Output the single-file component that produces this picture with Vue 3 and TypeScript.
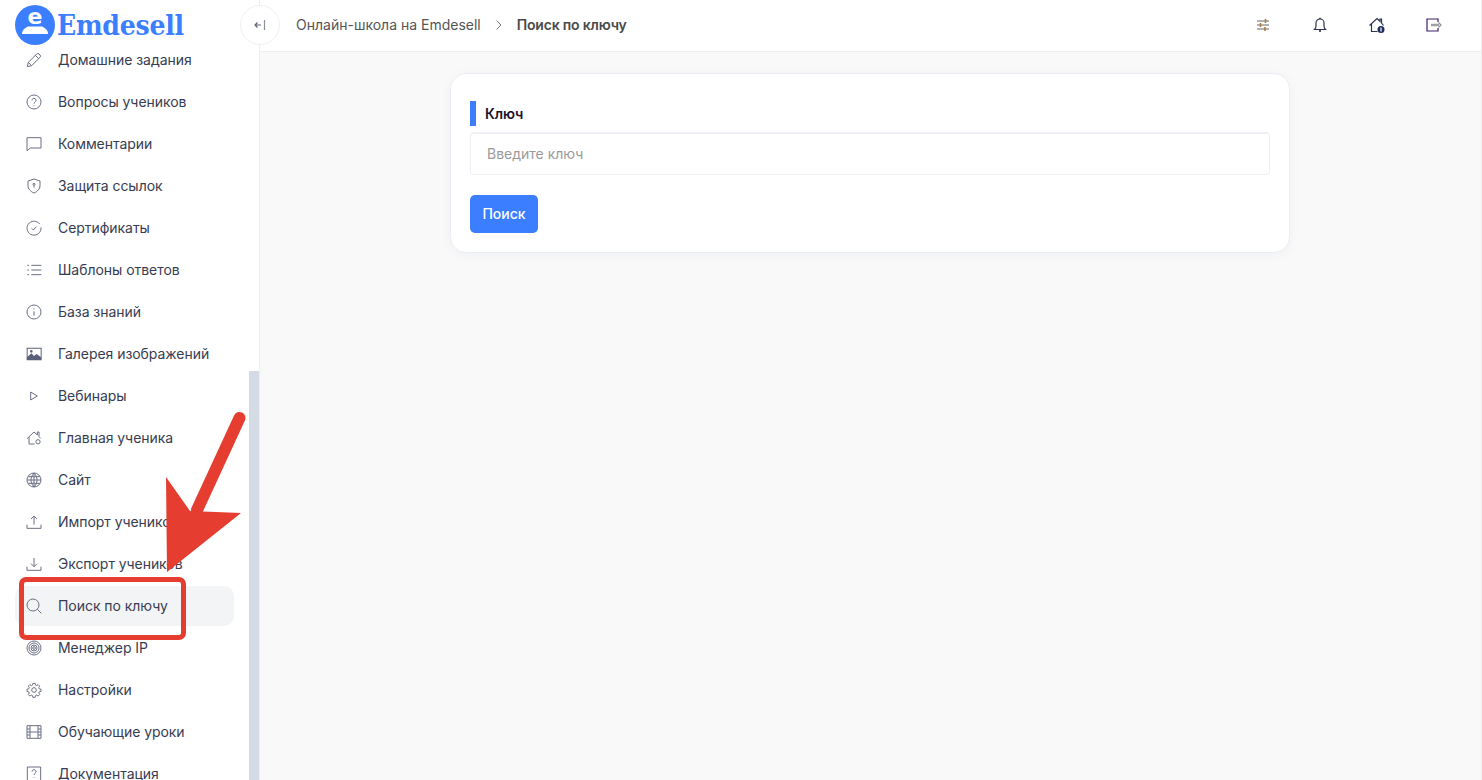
<script setup lang="ts">
interface NavItem {
  label: string
  paths: string[]
  filled?: boolean
  active?: boolean
}

const gear =
  'M10.3 2h3.4l.5 2.600 1.800.8 2.200-1.500 2.400 2.400-1.500 2.200.8 1.800 2.600.5v3.400l-2.600.5-.8 1.800 1.500 2.200-2.400 2.400-2.200-1.500-1.800.8-.5 2.600h-3.400l-.5-2.600-1.800-.8-2.200 1.500-2.400-2.400 1.500-2.200-.8-1.800-2.600-.5v-3.400l2.600-.5.8-1.800-1.500-2.200 2.400-2.400 2.200 1.500 1.800-.8z'

const circle = 'M12 1.500a10.500 10.500 0 1 0 0 21 10.500 10.500 0 0 0 0-21z'

const items: NavItem[] = [
  { label: 'Домашние задания', paths: ['M2 22l1.500-6.500L16 3a2.500 2.500 0 0 1 3.500 0l1.500 1.500a2.500 2.500 0 0 1 0 3.500L8.500 20.500z', 'M14 5l5 5', 'M3.500 15.500l5 5'] },
  { label: 'Вопросы учеников', paths: [circle, 'M9 9.500a3 3 0 1 1 4.500 2.600c-1 .6-1.500 1.200-1.500 2.400', 'M12 17v1'] },
  { label: 'Комментарии', paths: ['M1.500 2.500h21v15.500H6.500l-5 4z'] },
  { label: 'Защита ссылок', paths: ['M12 1.500l9 3v7c0 5-3.800 8.800-9 11-5.200-2.200-9-6-9-11v-7z', 'M12 8a1.500 1.500 0 1 0 0 3 1.500 1.500 0 0 0 0-3z', 'M12 11v3.500'] },
  { label: 'Сертификаты', paths: ['M20.500 6A10.500 10.500 0 1 0 22.500 11', 'M8.500 12.500l2.500 2.500 4.500-5'] },
  { label: 'Шаблоны ответов', paths: ['M8 5h15', 'M8 12h15', 'M8 19h15', 'M2 5h2.500', 'M2 12h2.500', 'M2 19h2.500'] },
  { label: 'База знаний', paths: [circle, 'M12 11v6.500', 'M12 6.500v1.500'] },
  { label: 'Галерея изображений', filled: true, paths: ['M1 2.500h22.500v19H1z M2.500 4v12l5.500-5 4 4 4-3 6 4.500V4z M8 6a2 2 0 1 0 0 4 2 2 0 0 0 0-4z'] },
  { label: 'Вебинары', paths: ['M7 6l10 6-10 6z'] },
  { label: 'Главная ученика', paths: ['M1.500 13L12 3l5 4.500V3h2.500v7l2.500 2.500', 'M4.500 10.500V21h8.500', 'M18 14.500a3.200 3.200 0 1 0 0 6.400 3.200 3.200 0 0 0 0-6.400z'] },
  { label: 'Сайт', paths: [circle, 'M12 1.500c-6 6-6 15 0 21c6-6 6-15 0-21z', 'M1.500 12h21', 'M3 7h18', 'M3 17h18', 'M12 1.500v21'] },
  { label: 'Импорт учеников', paths: ['M12 16V3', 'M7.500 7.500L12 3l4.500 4.500', 'M1.500 16v5.500h21V16'] },
  { label: 'Экспорт учеников', paths: ['M12 3v13', 'M7.500 11.500L12 16l4.500-4.500', 'M1.500 16v5.500h21V16'] },
  { label: 'Поиск по ключу', active: true, paths: ['M10.500 1.500a9 9 0 1 0 0 18 9 9 0 0 0 0-18z', 'M17 17l6 6'] },
  { label: 'Менеджер IP', paths: [circle, 'M12 4.500a7.500 7.500 0 1 0 0 15 7.500 7.500 0 0 0 0-15z', 'M12 7.500a4.500 4.500 0 1 0 0 9 4.500 4.500 0 0 0 0-9z', 'M12 10a2 2 0 1 0 0 4 2 2 0 0 0 0-4z'] },
  { label: 'Настройки', paths: [gear, 'M12 8.500a3.500 3.500 0 1 0 0 7 3.500 3.500 0 0 0 0-7z'] },
  { label: 'Обучающие уроки', paths: ['M1.500 2.500h21v19h-21z', 'M6 2.500v19', 'M18 2.500v19', 'M6 12h12', 'M1.500 7.500H6', 'M1.500 12H6', 'M1.500 16.500H6', 'M18 7.500h4.500', 'M18 12h4.500', 'M18 16.500h4.500'] },
  { label: 'Документация', paths: ['M2 1.500h20v21H2z', 'M9 8.500a3 3 0 1 1 4.500 2.600c-1 .6-1.500 1.200-1.500 2.400', 'M12 17v1'] }
]
</script>

<template>
  <div class="app">
    <aside class="sidebar">
      <div class="logo">
        <svg class="logo-mark" width="40" height="40" viewBox="0 0 40 40" aria-hidden="true">
          <circle cx="20" cy="20" r="20" fill="#3b7eff" />
          <path d="M7 29c0-4 3-6 6-7.500h14c3 1.500 6 3.500 6 7.500z" fill="#fff" />
          <text class="logo-e" x="20" y="19" text-anchor="middle">e</text>
        </svg>
        <span class="logo-text">Emdesell</span>
      </div>
      <nav class="nav">
        <a v-for="item in items" :key="item.label" class="nav-item" :class="{ active: item.active }">
          <svg class="nav-icon" :class="{ filled: item.filled }" viewBox="0 0 24 24" aria-hidden="true">
            <path v-for="d in item.paths" :key="d" :d="d" />
          </svg>
          <span class="nav-label">{{ item.label }}</span>
        </a>
      </nav>
      <div class="scroll-thumb"></div>
    </aside>

    <div class="content">
      <header class="topbar">
        <button class="collapse" type="button" aria-label="Свернуть">
          <svg width="12" height="12" viewBox="0 0 12 12" aria-hidden="true">
            <path d="M7 6H1M3.500 3.500L1 6l2.500 2.500" fill="none" stroke="#5f6470" stroke-width="1.200" />
            <path d="M10.500 1v10" fill="none" stroke="#8a8f9a" stroke-width="1.200" />
          </svg>
        </button>
        <div class="crumbs">
          <span class="crumb">Онлайн-школа на Emdesell</span>
          <svg class="crumb-sep" width="8" height="12" viewBox="0 0 8 12" aria-hidden="true">
            <path d="M1.500 1.500L6 6l-4.500 4.500" fill="none" stroke="#777" stroke-width="1" />
          </svg>
          <span class="crumb current">Поиск по ключу</span>
        </div>
        <div class="tools">
          <svg class="tool" viewBox="0 0 16 16" aria-hidden="true">
            <path d="M2 4h12M2 8h12M2 12h12" stroke="#9a9a9a" stroke-width="1.400" />
            <path d="M10.500 2v4M5.500 6v4M10 10v4" stroke="#a8793a" stroke-width="1.500" />
          </svg>
          <svg class="tool" viewBox="0 0 16 16" aria-hidden="true">
            <path d="M2.500 12.500c1-1 1.500-2 1.500-3.500V6a4 4 0 0 1 8 0v3c0 1.500.5 2.500 1.500 3.500z" stroke="#2c3350" stroke-width="1.200" />
            <path d="M8 .8v1.200M7 14h2" stroke="#1c2030" stroke-width="1.500" />
          </svg>
          <svg class="tool" viewBox="0 0 16 16" aria-hidden="true">
            <path d="M.5 8.500L8 1.500l3 2.800V2h1.500v4l2 2.500M2.500 7v7.500h6" stroke="#2c3350" stroke-width="1.200" />
            <circle cx="12" cy="12.500" r="3.500" fill="#1f2c5c" stroke="none" />
            <path d="M12 10.500v4" stroke="#fff" stroke-width="1.200" />
          </svg>
          <svg class="tool" viewBox="0 0 16 16" aria-hidden="true">
            <path d="M12 5V2H1v12h11v-3" stroke="#3b1f6e" stroke-width="1.200" />
            <path d="M5 8h8" stroke="#a0a0a6" stroke-width="2.500" />
            <path d="M12.500 5.500L15 8l-2.500 2.500" stroke="#8e8e94" stroke-width="1.200" />
          </svg>
        </div>
      </header>

      <main class="main">
        <section class="card">
          <label class="field-label" for="key">Ключ</label>
          <input id="key" class="field" type="text" placeholder="Введите ключ" />
          <button class="search" type="button">Поиск</button>
        </section>
      </main>
    </div>

    <div class="callout"></div>
    <svg class="arrow" width="1482" height="780" viewBox="0 0 1482 780" aria-hidden="true">
      <path d="M239.500 418L197 510" fill="none" stroke="#e53d30" stroke-width="12" stroke-linecap="round" />
      <path d="M166 477L190 511L241 513L167 572z" fill="#e53d30" />
    </svg>
  </div>
</template>

<style scoped>
.app {
  position: relative;
  display: flex;
  height: 780px;
  overflow: hidden;
  font-family: Inter, "Noto Sans", sans-serif;
  font-size: 14px;
  background: #f9f9fa;
}

.sidebar {
  position: relative;
  flex: 0 0 260px;
  box-sizing: border-box;
  height: 780px;
  padding: 5px 0 0 15px;
  overflow: hidden;
  background: #fff;
  border-right: 1px solid #eeeeee;
}

.logo {
  position: relative;
  z-index: 1;
  display: flex;
  align-items: flex-start;
  gap: 2px;
  height: 35px;
}

.logo-mark {
  flex: none;
  overflow: visible;
}

.logo-e {
  font-family: "DejaVu Sans", sans-serif;
  font-size: 22px;
  font-weight: 700;
  fill: #fff;
}

.logo-text {
  font-family: "DejaVu Serif Condensed", "DejaVu Serif", serif;
  font-size: 28px;
  font-stretch: condensed;
  font-weight: 700;
  line-height: 41px;
  letter-spacing: -0.25px;
  color: #3b7eff;
}

.nav {
  display: flex;
  flex-direction: column;
  gap: 2px;
  width: 219px;
}

.nav-item {
  display: flex;
  flex: none;
  align-items: center;
  gap: 16px;
  height: 40px;
  padding-left: 11px;
  border-radius: 10px;
  color: #373c52;
  letter-spacing: -0.05px;
  white-space: nowrap;
}

.nav-item.active {
  background: #f3f4f6;
}

.nav-label {
  margin-bottom: 2px;
}

.nav-icon {
  flex: none;
  width: 16px;
  height: 16px;
  fill: none;
  stroke: #6b7085;
  stroke-width: 1.500;
}

.nav-icon.filled {
  fill: #5a607a;
  fill-rule: evenodd;
  stroke: none;
}

.scroll-thumb {
  position: absolute;
  top: 371px;
  right: -1px;
  bottom: 0;
  width: 11px;
  background: #d5dbe5;
}

.content {
  display: flex;
  flex: 1;
  flex-direction: column;
  min-width: 0;
  border-right: 1px solid #efefef;
}

.topbar {
  display: flex;
  flex: none;
  align-items: center;
  box-sizing: border-box;
  height: 52px;
  background: #fff;
  border-bottom: 1px solid #eeeeee;
}

.collapse {
  position: relative;
  z-index: 2;
  display: flex;
  flex: none;
  align-items: center;
  justify-content: center;
  box-sizing: border-box;
  width: 40px;
  height: 40px;
  margin: -2px 0 0 -20px;
  padding: 0;
  background: #fff;
  border: 1px solid #eef0f6;
  border-radius: 50%;
}

.crumbs {
  display: flex;
  align-items: center;
  margin-left: 16px;
  margin-top: -2px;
  color: #555;
  font-size: 14px;
}

.crumb-sep {
  margin: 0 14px;
}

.current {
  font-weight: 600;
  letter-spacing: -0.19px;
  color: #4a4a4a;
}

.tools {
  display: flex;
  gap: 41px;
  margin-left: auto;
  margin-right: 39px;
  margin-top: -2px;
}

.tool {
  width: 16px;
  height: 16px;
  fill: none;
  stroke-width: 1.100;
}

.main {
  flex: 1;
  padding-top: 21px;
}

.card {
  display: flex;
  flex-direction: column;
  align-items: flex-start;
  box-sizing: border-box;
  width: 840px;
  height: 180px;
  margin-left: 190px;
  padding: 27px 20px 19px;
  background: #fff;
  border: 1px solid #eceef6;
  border-radius: 16px;
  box-shadow: 0 2px 12px rgba(30, 40, 70, 0.045);
}

.field-label {
  display: flex;
  flex: none;
  align-items: center;
  box-sizing: border-box;
  height: 25px;
  padding-left: 9px;
  margin-left: -1px;
  border-left: 6px solid #3b7eff;
  font-weight: 600;
  letter-spacing: -0.1px;
  color: #1b1228;
}

.field {
  flex: none;
  box-sizing: border-box;
  width: 800px;
  height: 43px;
  margin: 6px 0 20px -1px;
  padding: 0 16px 2px;
  font: inherit;
  background: #fff;
  border: 1px solid #eef0f6;
  border-top-width: 2px;
  border-radius: 4px;
  outline: none;
}

.field::placeholder {
  color: #9a9a9a;
  opacity: 1;
}

.search {
  flex: none;
  box-sizing: border-box;
  width: 68px;
  height: 38px;
  margin-left: -1px;
  padding: 0 0 1px;
  font: inherit;
  font-weight: 500;
  color: #fff;
  background: #3b7eff;
  border: none;
  border-radius: 5px;
}

.callout {
  position: absolute;
  top: 577px;
  left: 19px;
  z-index: 5;
  box-sizing: border-box;
  width: 167px;
  height: 63px;
  border: 5px solid #e53d30;
  border-radius: 7px;
}

.arrow {
  position: absolute;
  top: 0;
  left: 0;
  z-index: 6;
  pointer-events: none;
}
</style>

<style>
html,
body {
  margin: 0;
}
</style>
